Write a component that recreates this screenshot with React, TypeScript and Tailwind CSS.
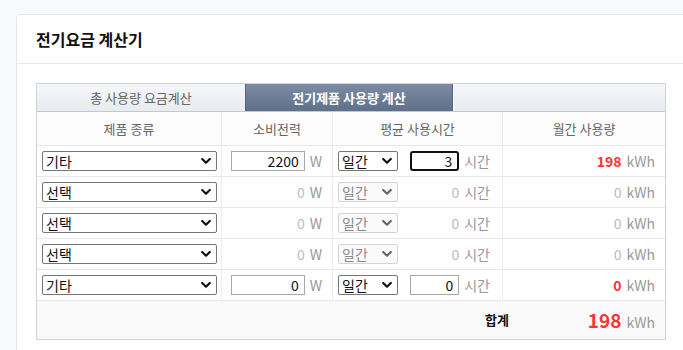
import React from "react";

const font = { fontFamily: '"Noto Sans CJK KR", "Noto Sans", sans-serif' };

function Chevron({ disabled }: { disabled?: boolean }) {
  return (
    <svg
      width="10"
      height="7"
      viewBox="0 0 10 7"
      className="pointer-events-none absolute right-[6px] top-1/2 -translate-y-1/2"
    >
      <path
        d="M1.2 1.5 L5 5.2 L8.8 1.5"
        fill="none"
        stroke={disabled ? "#666" : "#111"}
        strokeWidth="2.2"
        strokeLinecap="round"
        strokeLinejoin="round"
      />
    </svg>
  );
}

function Sel({ value, w, disabled }: { value: string; w: string; disabled?: boolean }) {
  return (
    <div className={`relative h-[20px] ${w}`}>
      <select
        disabled={disabled}
        defaultValue={value}
        className={`h-full w-full appearance-none rounded-[2px] border pl-[3px] text-[14px] leading-[18px] outline-none ${
          disabled
            ? "border-[#d4d4d4] bg-[#fafafa] text-[#8a8a8a]"
            : "border-[#767676] bg-white text-[#111]"
        }`}
        style={font}
      >
        <option>{value}</option>
      </select>
      <Chevron disabled={disabled} />
    </div>
  );
}

type Row = { kind: string; active: boolean; watt: string; hours: string; kwh: string; focus?: boolean };

const rows: Row[] = [
  { kind: "기타", active: true, watt: "2200", hours: "3", kwh: "198", focus: true },
  { kind: "선택", active: false, watt: "0", hours: "0", kwh: "0" },
  { kind: "선택", active: false, watt: "0", hours: "0", kwh: "0" },
  { kind: "선택", active: false, watt: "0", hours: "0", kwh: "0" },
  { kind: "기타", active: true, watt: "0", hours: "0", kwh: "0" },
];

export default function App() {
  return (
    <div className="h-[350px] w-[683px] overflow-hidden bg-[#f8f9fa] pl-4 pt-[14px]" style={font}>
      <div className="w-[700px] rounded-[5px] border border-[#e6e8eb] bg-white">
        <div className="flex h-[49px] items-center border-b border-[#e6e8eb] pl-[19px]">
          <h1 className="text-[16px] font-bold text-[#111]">전기요금 계산기</h1>
        </div>
        <div className="pl-[19px] pt-[19px] pb-4">
          <div className="w-[630px] border border-[#cfd3d9]">
            {/* tabs */}
            <div className="flex h-[28px] border-b border-[#c3c8cf]">
              <div className="flex w-[208px] items-center justify-center bg-gradient-to-b from-[#f5f6f8] to-[#e9ecf0] text-[13px] text-[#666]">
                총 사용량 요금계산
              </div>
              <div className="flex w-[208px] items-center justify-center border-x border-[#56667d] bg-gradient-to-b from-[#7d8ca3] to-[#5f708a] text-[13px] font-bold text-white">
                전기제품 사용량 계산
              </div>
              <div className="flex-1 border-l border-white bg-gradient-to-b from-[#f5f6f8] to-[#e9ecf0]" />
            </div>
            {/* header */}
            <div className="grid h-[34px] grid-cols-[185px_111px_170px_1fr] border-b border-[#e8e8e8] bg-[#fcfcfc] text-[13px] text-[#666]">
              <div className="flex items-center justify-center border-r border-[#ececec]">제품 종류</div>
              <div className="flex items-center justify-center border-r border-[#ececec]">소비전력</div>
              <div className="flex items-center justify-center border-r border-[#ececec]">평균 사용시간</div>
              <div className="flex items-center justify-center">월간 사용량</div>
            </div>
            {rows.map((r, i) => (
              <div
                key={i}
                className="grid h-[31px] grid-cols-[185px_111px_170px_1fr] border-b border-[#e8e8e8] bg-white text-[13px]"
              >
                <div className="flex items-center border-r border-[#ececec] pl-[5px]">
                  <Sel value={r.kind} w="w-[175px]" />
                </div>
                <div className="flex items-center justify-end gap-[5px] border-r border-[#ececec] pr-[10px]">
                  {r.active ? (
                    <div className="flex h-[20px] w-[74px] items-center justify-end border border-[#a8a8a8] pr-[5px] text-[14px] text-[#111]">
                      {r.watt}
                    </div>
                  ) : (
                    <span className="text-[14px] text-[#bbb]">{r.watt}</span>
                  )}
                  <span className="text-[14px] text-[#999]">W</span>
                </div>
                <div className="flex items-center border-r border-[#ececec] pl-[5px] pr-[12px]">
                  <Sel value="일간" w="w-[60px]" disabled={!r.active} />
                  <div className="flex flex-1 items-center justify-end gap-[5px]">
                    {r.active ? (
                      <div
                        className={`flex h-[20px] w-[49px] items-center justify-end pr-[5px] text-[14px] text-[#111] ${
                          r.focus ? "rounded-[3px] border-2 border-[#111]" : "border border-[#a8a8a8]"
                        }`}
                      >
                        {r.hours}
                      </div>
                    ) : (
                      <span className="text-[14px] text-[#bbb]">{r.hours}</span>
                    )}
                    <span className="text-[14px] text-[#999]">시간</span>
                  </div>
                </div>
                <div className="flex items-center justify-end gap-[5px] pr-[10px] text-[14px]">
                  <span className={r.active ? "font-bold text-[#ff3333]" : "text-[#bbb]"}>{r.kwh}</span>
                  <span className="text-[#999]">kWh</span>
                </div>
              </div>
            ))}
            {/* footer */}
            <div className="flex h-[38px] items-center justify-end bg-[#f9f9f9]">
              <span className="text-[13px] font-bold text-[#111]">합계</span>
              <div className="flex w-[156px] items-baseline justify-end gap-[5px] pr-[10px]">
                <span className="text-[19px] font-bold text-[#ff3333]">198</span>
                <span className="text-[14px] text-[#999]">kWh</span>
              </div>
            </div>
          </div>
        </div>
      </div>
    </div>
  );
}
